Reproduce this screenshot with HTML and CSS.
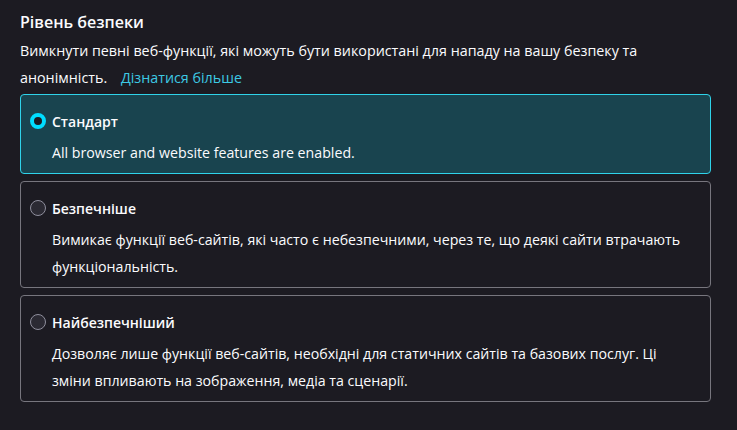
FILE: index.html
```html
<!DOCTYPE html>
<html lang="uk">
<head>
<meta charset="utf-8">
<link rel="stylesheet" href="styles.css">
</head>
<body>
<main class="section">
  <h1 class="title">Рівень безпеки</h1>
  <p class="intro">Вимкнути певні веб-функції, які можуть бути використані для нападу на вашу безпеку та<br>анонімність. <a class="link" href="#">Дізнатися більше</a></p>
  <div class="options">
    <label class="option selected">
      <span class="head"><span class="radio on"></span><span class="name">Стандарт</span></span>
      <span class="desc">All browser and website features are enabled.</span>
    </label>
    <label class="option">
      <span class="head"><span class="radio"></span><span class="name">Безпечніше</span></span>
      <span class="desc">Вимикає функції веб-сайтів, які часто є небезпечними, через те, що деякі сайти втрачають<br>функціональність.</span>
    </label>
    <label class="option">
      <span class="head"><span class="radio"></span><span class="name">Найбезпечніший</span></span>
      <span class="desc">Дозволяє лише функції веб-сайтів, необхідні для статичних сайтів та базових послуг. Ці<br>зміни впливають на зображення, медіа та сценарії.</span>
    </label>
  </div>
</main>
</body>
</html>
```
FILE: styles.css
```css
html, body {
  margin: 0;
  padding: 0;
  background: #1c1b22;
  color: #fbfbfe;
  font-family: "Open Sans", "Noto Sans", sans-serif;
}
.section {
  padding: 10px 26px 0 20px;
}
.title {
  margin: 0;
  font-size: 16px;
  font-weight: 600;
  line-height: 24px;
}
.intro {
  margin: 3px 0 3px;
  font-size: 14.3px;
  line-height: 27px;
  white-space: nowrap;
}
.link {
  color: #3cc9e4;
  text-decoration: none;
  margin-left: 10px;
}
.options {
  display: flex;
  flex-direction: column;
  gap: 7px;
}
.option {
  display: flex;
  flex-direction: column;
  border: 1px solid #77767e;
  border-radius: 4px;
  padding: 14px 9px 7px;
}
.option.selected {
  background: #19444f;
  border-color: #2fd3ea;
}
.head {
  display: flex;
  align-items: center;
  gap: 6px;
  height: 24px;
}
.radio {
  width: 16px;
  height: 16px;
  box-sizing: border-box;
  border-radius: 50%;
  border: 1px solid #8f8f9d;
  background: #2b2a33;
  flex: none;
}
.radio.on {
  border: 4px solid #00ddff;
  background: #1c1b22;
}
.name {
  font-size: 14px;
  font-weight: 600;
}
.desc {
  margin: 6px 0 0 22px;
  font-size: 14.2px;
  line-height: 27px;
  white-space: nowrap;
}
```
